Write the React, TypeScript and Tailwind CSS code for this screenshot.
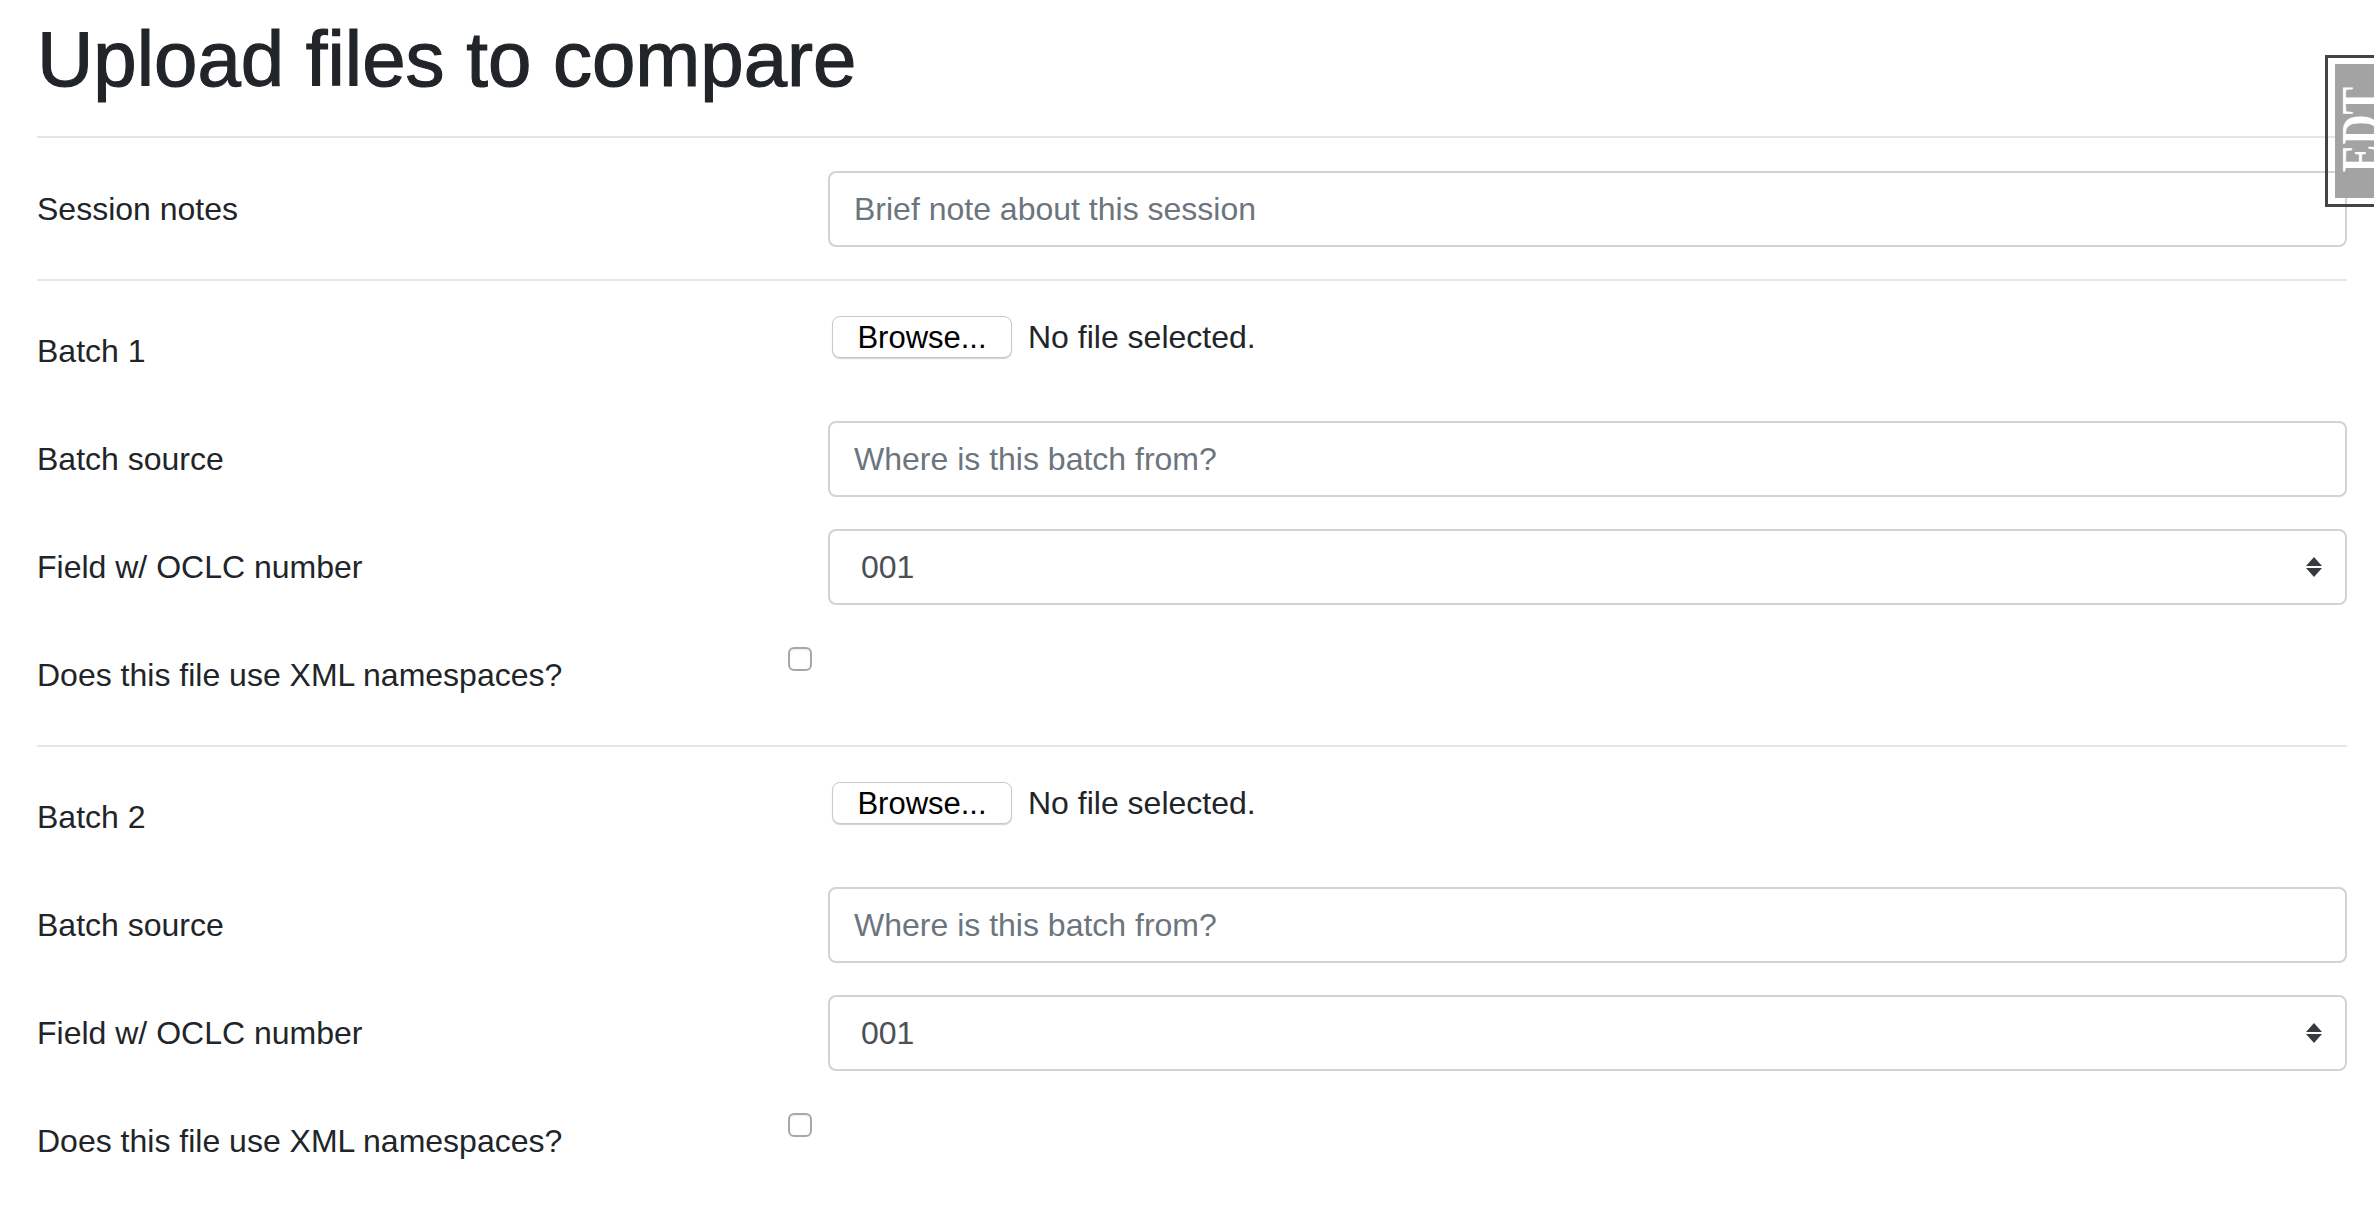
import type { ReactNode } from 'react';

function FormRow({ label, children }: { label: string; children: ReactNode }) {
  return (
    <div className="mb-[32px] flex">
      <label className="w-[791px] shrink-0 py-[14px] text-[32px] leading-[48px]">{label}</label>
      <div className="min-w-0 flex-1">{children}</div>
    </div>
  );
}

function TextField({ placeholder }: { placeholder: string }) {
  return (
    <input
      type="text"
      placeholder={placeholder}
      className="block h-[76px] w-full rounded-[8px] border-2 border-[#ced4da] bg-white px-[24px] text-[32px] text-[#495057] outline-none placeholder:text-[#6c757d]"
    />
  );
}

function FileField() {
  return (
    <div className="flex h-[48px] items-center">
      <button
        type="button"
        className="ml-[4px] h-[42px] w-[180px] rounded-[8px] border border-[#c9c9c9] bg-white text-[31px] leading-none text-black shadow-[0_1px_1px_rgba(0,0,0,0.18)]"
      >
        Browse...
      </button>
      <span className="ml-[16px] text-[32px] leading-[48px]">No file selected.</span>
    </div>
  );
}

function SelectField({ value }: { value: string }) {
  return (
    <div className="flex h-[76px] w-full items-center justify-between rounded-[8px] border-2 border-[#ced4da] bg-white pr-[23px] pl-[31px] text-[32px] text-[#495057]">
      <span>{value}</span>
      <svg width="16" height="20" viewBox="0 0 16 20" className="text-[#343a40]">
        <path d="M8 0 L16 9 L0 9 Z" fill="currentColor" />
        <path d="M0 11 L16 11 L8 20 Z" fill="currentColor" />
      </svg>
    </div>
  );
}

function CheckField() {
  return (
    <div className="-ml-[40px] mt-[10px] h-[24px] w-[24px] rounded-[6px] border-2 border-[#a8a8a8] bg-white shadow-[inset_0_1px_2px_rgba(0,0,0,0.08)]" />
  );
}

function Batch({ n }: { n: number }) {
  return (
    <>
      <div className="mb-[32px] h-[2px] bg-[#e6e6e6]" />
      <FormRow label={`Batch ${n}`}>
        <FileField />
      </FormRow>
      <FormRow label="Batch source">
        <TextField placeholder="Where is this batch from?" />
      </FormRow>
      <FormRow label="Field w/ OCLC number">
        <SelectField value="001" />
      </FormRow>
      <FormRow label="Does this file use XML namespaces?">
        <CheckField />
      </FormRow>
    </>
  );
}

export default function App() {
  return (
    <div className="relative h-[1210px] overflow-hidden bg-white pr-[27px] pl-[37px] font-['Liberation_Sans',Arial,sans-serif] text-[#212529]">
      <h1 className="pt-[11px] text-[78px] leading-[96px] [-webkit-text-stroke:1.2px_#212529]">
        Upload files to compare
      </h1>
      <div className="mt-[29px] mb-[33px] h-[2px] bg-[#e6e6e6]" />
      <FormRow label="Session notes">
        <TextField placeholder="Brief note about this session" />
      </FormRow>
      <Batch n={1} />
      <Batch n={2} />

      {/* bookmarklet tab pinned to the right edge */}
      <div className="absolute top-[55px] left-[2325px] h-[152px] w-[80px] border-[3px] border-[#444] py-[6px] pl-[7px]">
        <div className="relative h-full overflow-hidden bg-[#a3a3a3]">
          <span className="absolute top-[12px] left-[0px] font-['Liberation_Serif',serif] text-[52px] leading-none font-bold text-white [writing-mode:vertical-rl] [transform:rotate(180deg)_scaleY(0.8)]">
            EDT
          </span>
        </div>
      </div>
    </div>
  );
}
